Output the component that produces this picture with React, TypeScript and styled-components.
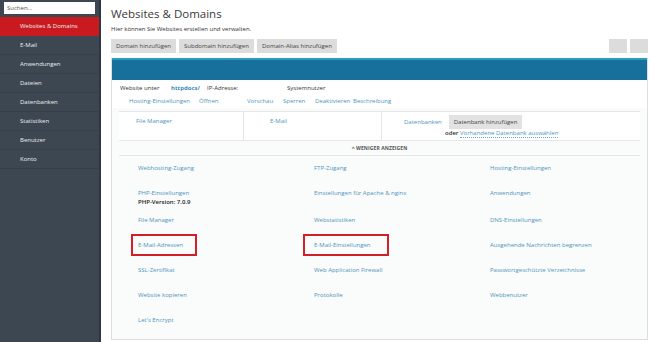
import styled, { createGlobalStyle } from 'styled-components'

const GlobalStyle = createGlobalStyle`
  html, body {
    margin: 0;
    padding: 0;
    background: #ffffff;
  }
  body {
    font-family: "Open Sans", "DejaVu Sans", sans-serif;
    font-size: 6px;
    color: #333;
  }
`

const Page = styled.div`
  display: flex;
  width: 650px;
  height: 342px;
  overflow: hidden;
`

const Sidebar = styled.aside`
  width: 101px;
  flex-shrink: 0;
  background: #3c4752;
  border-right: 2px solid #2f3841;
  padding-top: 2px;
  box-sizing: border-box;
`

const Search = styled.div`
  margin: 0 4px 3px;
  height: 12px;
  background: #fff;
  color: #555;
  padding-left: 3px;
  line-height: 12px;
`

const NavItem = styled.div<{ $active?: boolean }>`
  height: 19px;
  line-height: 19px;
  padding-left: 20px;
  color: #eceef0;
  background: ${p => (p.$active ? '#c91b1f' : 'transparent')};
  border-bottom: 1px solid ${p => (p.$active ? '#c91b1f' : '#36404a')};
  box-sizing: border-box;
`

const Main = styled.main`
  flex: 1;
  padding: 6px 2px 0 10px;
  display: flex;
  flex-direction: column;
`

const Title = styled.h1`
  margin: 0;
  font-size: 11.5px;
  font-weight: 400;
  line-height: 16px;
  color: #3a3a3a;
`

const Subtitle = styled.p`
  margin: 2px 0 0;
  line-height: 10px;
`

const Toolbar = styled.div`
  display: flex;
  margin-top: 5px;
  gap: 3px;
`

const ToolButton = styled.div<{ $square?: boolean }>`
  height: 14px;
  line-height: 14px;
  padding: 0 5px;
  width: ${p => (p.$square ? '18px' : 'auto')};
  box-sizing: border-box;
  background: #dcdcdc;
  color: #444;
`

const Spacer = styled.div`
  flex: 1;
`

const Panel = styled.section`
  margin-top: 5px;
  border: 1px solid #dedede;
  border-top: none;
  background: #fafbfb;
`

const PanelHead = styled.div`
  height: 20px;
  background: #17709b;
  border-top: 2px solid #2f9bbf;
`

const Info = styled.div`
  background: #fff;
  padding: 3px 0 2px 8px;
`

const InfoRow = styled.div`
  display: flex;
  line-height: 10px;
  color: #333;
`

const InfoCell = styled.span<{ $w: number }>`
  width: ${p => p.$w}px;
`

const Strong = styled.span`
  font-weight: 700;
  color: #3a8dba;
`

const Actions = styled.div`
  display: grid;
  grid-template-columns: 70px 48px 36px 32px 38px auto;
  padding: 3px 0 0 9px;
  line-height: 10px;
`

const Link = styled.span<{ $box?: [number, number] }>`
  color: #4f95bd;
  position: relative;
  white-space: nowrap;
  ${p =>
    p.$box
      ? `&::after {
    content: '';
    position: absolute;
    left: -${p.$box[0]}px;
    right: -${p.$box[1]}px;
    top: -7px;
    bottom: -7px;
    border: 2px solid #d31f27;
  }`
      : ''}
`

const Services = styled.div`
  display: grid;
  grid-template-columns: 125px 138px 1fr;
  margin: 3px 7px 0;
  border-top: 1px solid #e6e6e6;
  border-bottom: 1px solid #e6e6e6;
  height: 30px;
  box-sizing: border-box;
  background: #fff;
`

const ServiceCol = styled.div<{ $pad: number; $last?: boolean }>`
  padding: 4px 0 0 ${p => p.$pad}px;
  border-right: ${p => (p.$last ? 'none' : '1px solid #e6e6e6')};
  line-height: 10px;
`

const DbRow = styled.div`
  display: flex;
  align-items: center;
  gap: 7px;
  margin-top: -1px;
`

const DbButton = styled.div`
  height: 14px;
  line-height: 14px;
  padding: 0 5px;
  background: #e2e2e2;
  color: #444;
`

const DbNote = styled.div`
  margin-left: 41px;
  line-height: 9px;
  color: #333;

  b {
    font-weight: 600;
  }
`

const Dotted = styled.span`
  color: #4f95bd;
  border-bottom: 1px dotted #6aa8cc;
`

const Toggle = styled.div`
  margin: 0 7px;
  height: 14px;
  line-height: 14px;
  text-align: center;
  border-bottom: 1px solid #e6e6e6;
  font-size: 5px;
  font-weight: 700;
  color: #555;
  letter-spacing: 0.1px;
`

const Grid = styled.div`
  display: grid;
  grid-template-columns: 176px 176px 1fr;
  grid-template-rows: 25px 27px 25px 25px 25px 25px 25px;
  padding: 0 0 6px 26px;
`

const Cell = styled.div`
  padding-top: 7px;
  line-height: 10px;
`

const Version = styled.div`
  line-height: 8px;
  color: #222;
  font-weight: 600;
`

const nav = ['Websites & Domains', 'E-Mail', 'Anwendungen', 'Dateien', 'Datenbanken', 'Statistiken', 'Benutzer', 'Konto']

const actions = ['Hosting-Einstellungen', 'Öffnen', 'Vorschau', 'Sperren', 'Deaktivieren', 'Beschreibung']

export default function App() {
  return (
    <Page>
      <GlobalStyle />
      <Sidebar>
        <Search>Suchen...</Search>
        {nav.map((n, i) => (
          <NavItem key={n} $active={i === 0}>{n}</NavItem>
        ))}
      </Sidebar>
      <Main>
        <Title>Websites &amp; Domains</Title>
        <Subtitle>Hier können Sie Websites erstellen und verwalten.</Subtitle>
        <Toolbar>
          <ToolButton>Domain hinzufügen</ToolButton>
          <ToolButton>Subdomain hinzufügen</ToolButton>
          <ToolButton>Domain-Alias hinzufügen</ToolButton>
          <Spacer />
          <ToolButton $square />
          <ToolButton $square />
        </Toolbar>
        <Panel>
          <PanelHead />
          <Info>
            <InfoRow>
              <InfoCell $w={51}>Website unter</InfoCell>
              <InfoCell $w={36}><Strong>httpdocs/</Strong></InfoCell>
              <InfoCell $w={80}>IP-Adresse:</InfoCell>
              <InfoCell $w={60}>Systemnutzer</InfoCell>
            </InfoRow>
            <Actions>
              {actions.map(a => (
                <Link key={a}>{a}</Link>
              ))}
            </Actions>
          </Info>
          <Services>
            <ServiceCol $pad={17}><Link>File Manager</Link></ServiceCol>
            <ServiceCol $pad={26}><Link>E-Mail</Link></ServiceCol>
            <ServiceCol $pad={22} $last>
              <DbRow>
                <Link>Datenbanken</Link>
                <DbButton>Datenbank hinzufügen</DbButton>
              </DbRow>
              <DbNote>
                <b>oder</b> <Dotted>Vorhandene Datenbank auswählen</Dotted>
              </DbNote>
            </ServiceCol>
          </Services>
          <Toggle>^ WENIGER ANZEIGEN</Toggle>
          <Grid>
            <Cell><Link>Webhosting-Zugang</Link></Cell>
            <Cell><Link>FTP-Zugang</Link></Cell>
            <Cell><Link>Hosting-Einstellungen</Link></Cell>
            <Cell>
              <Link>PHP-Einstellungen</Link>
              <Version>PHP-Version: 7.0.9</Version>
            </Cell>
            <Cell><Link>Einstellungen für Apache &amp; nginx</Link></Cell>
            <Cell><Link>Anwendungen</Link></Cell>
            <Cell><Link>File Manager</Link></Cell>
            <Cell><Link>Webstatistiken</Link></Cell>
            <Cell><Link>DNS-Einstellungen</Link></Cell>
            <Cell><Link $box={[7, 14]}>E-Mail-Adressen</Link></Cell>
            <Cell><Link $box={[11, 18]}>E-Mail-Einstellungen</Link></Cell>
            <Cell><Link>Ausgehende Nachrichten begrenzen</Link></Cell>
            <Cell><Link>SSL-Zertifikat</Link></Cell>
            <Cell><Link>Web Application Firewall</Link></Cell>
            <Cell><Link>Passwortgeschützte Verzeichnisse</Link></Cell>
            <Cell><Link>Website kopieren</Link></Cell>
            <Cell><Link>Protokolle</Link></Cell>
            <Cell><Link>Webbenutzer</Link></Cell>
            <Cell><Link>Let's Encrypt</Link></Cell>
          </Grid>
        </Panel>
      </Main>
    </Page>
  )
}
